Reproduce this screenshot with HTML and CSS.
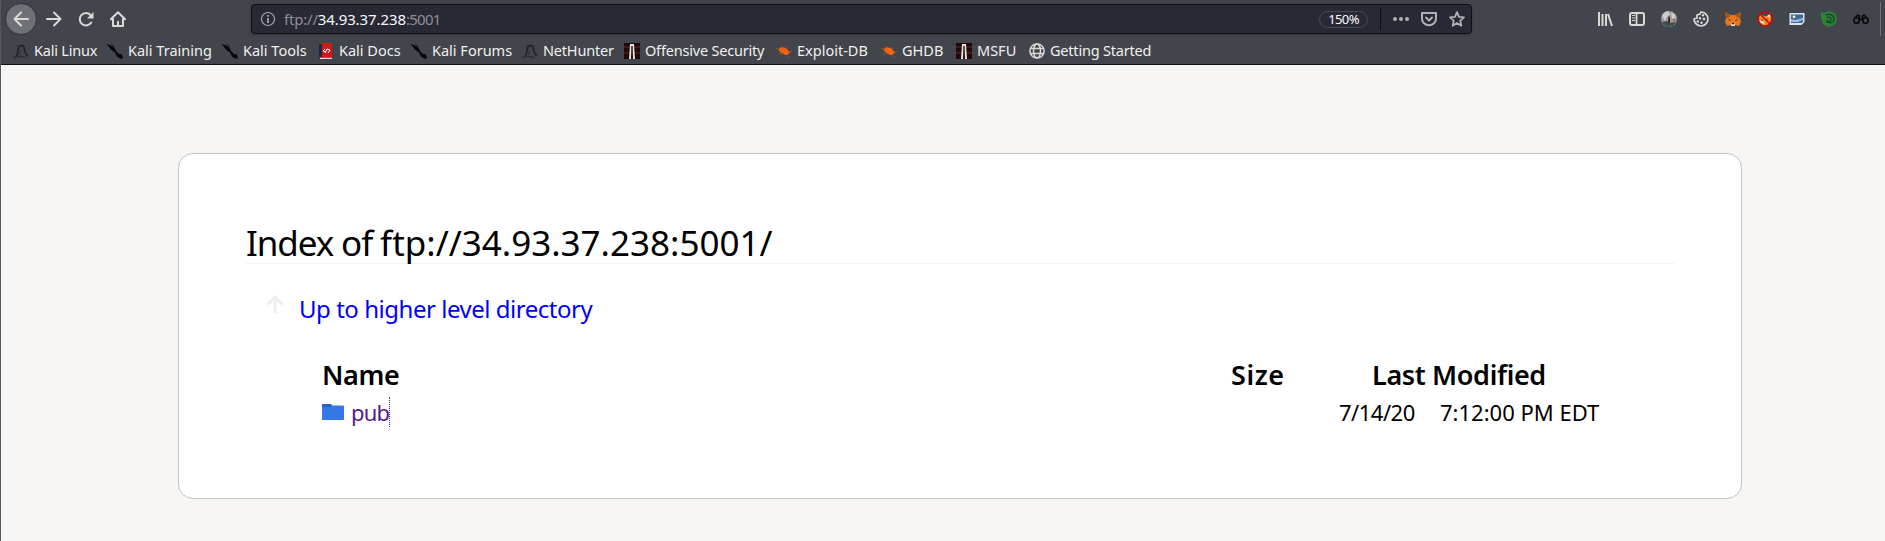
FILE: index.html
```html
<!DOCTYPE html>
<html lang="en">
<head>
<meta charset="utf-8">
<title>Index of ftp://34.93.37.238:5001/</title>
<link rel="stylesheet" href="styles.css">
</head>
<body>
<svg class="defs" width="0" height="0">
  <symbol id="dragon" viewBox="0 0 16 16"><path d="M3 13C6 11 4 7 6 4c1-2 4-2 5 0 1 3 0 6 4 9" fill="none" stroke="#202328" stroke-width="1.800"/><path d="M4 3l4 0M9 7c-2 1-3 3-2 5" fill="none" stroke="#2a2d32"/><path d="M0 14.500c4-1.200 9-1.200 13 0" fill="none" stroke="#2a2d32" stroke-width="1.200"/></symbol>
  <symbol id="slash" viewBox="0 0 16 16"><path d="M0 1l4 1.500 3 1.500 2 4 3 3 3 .5 1 4-3 0-3-2-2-4-3-2-3-3.500z" fill="#060606"/><path d="M4 1l4 2" stroke="#24262b"/></symbol>
  <symbol id="bug" viewBox="0 0 16 16"><path d="M2.500 7l1-2 3-1 4 1.500 2.500 3 1.500 1.500-2 .5-1 1.500-2.500 0-3.500-2-2.500-2z" fill="#ee6410"/><path d="M0 5.500l4 1M5 3l1 2M10 4.500l2 1M2 11l4-1M12 13l2 1M14 8.500h2" stroke="#a3592b" stroke-width=".7"/></symbol>
  <symbol id="offsec" viewBox="0 0 16 16"><path d="M0 0h16v16H0z" fill="#230709"/><path d="M0 4h16M0 10h16" stroke="#4b3437"/><path d="M6 1h4l1 15H9L8 6 7 16H5z" fill="#e8e2df"/><path d="M7.300 3h1.400v12H7.300z" fill="#171315"/></symbol>
</svg>
<header class="chrome">
  <nav class="toolbar">
    <span class="back"><svg width="16" height="16" viewBox="0 0 16 16"><path d="M15 8H2M8 1.500 1.500 8 8 14.500" class="ln"/></svg></span>
    <svg class="fwd" width="16" height="16" viewBox="0 0 16 16"><path d="M1 8h13M8 1.500 14.500 8 8 14.500" class="ln"/></svg>
    <svg class="reload" width="16" height="16" viewBox="0 0 16 16"><path d="M13.300 11.500A6.200 6.200 0 1 1 12.500 4" class="ln"/><path d="M15.500 1v6.500H9z" fill="#d9d9d6"/></svg>
    <svg class="home" width="16" height="16" viewBox="0 0 16 16"><path d="M.9 8.300 8 1.300l7.100 7M3 8v7h10V8M8 15v-4.200" class="ln"/></svg>
    <div class="urlbar">
      <svg class="info" width="16" height="16" viewBox="0 0 16 16"><circle cx="8" cy="8" r="6.500" fill="none" stroke="#a3a4a8" stroke-width="1.200"/><path d="M8 7v5M8 4v1.800" stroke="#a3a4a8" stroke-width="1.800"/></svg>
      <span class="url"><span class="scheme">ftp://</span><span class="host">34.93.37.238</span><span class="port">:5001</span></span>
      <span class="zoom">150%</span>
      <span class="rule"></span>
      <svg width="16" height="16" viewBox="0 0 16 16" fill="#b1b1b3"><circle cx="2" cy="8" r="2"/><circle cx="8" cy="8" r="2"/><circle cx="14" cy="8" r="2"/></svg>
      <svg width="16" height="16" viewBox="0 0 16 16" fill="none" stroke="#b1b1b3" stroke-width="2" stroke-linecap="round" stroke-linejoin="round"><path d="M1 2h14v5.500a7 6.800 0 0 1-14 0z"/><path d="M5 6.500l3 3 3-3"/></svg>
      <svg width="16" height="16" viewBox="0 0 16 16" fill="none" stroke="#b1b1b3" stroke-width="1.800" stroke-linejoin="round"><path d="M8 1.200l2 4.600 5 .5-3.700 3.400 1 5L8 12.100l-4.300 2.600 1-5L1 6.300l5-.5z"/></svg>
    </div>
    <div class="tools">
      <svg width="16" height="16" viewBox="0 0 16 16" fill="none" stroke="#d9d9d6" stroke-width="2"><path d="M2 1v14M5.500 3v12M9 3v12M11 3l4 12"/></svg>
      <svg width="16" height="16" viewBox="0 0 16 16" fill="none" stroke="#d9d9d6"><rect x="1" y="2" width="14" height="12" rx="2" stroke-width="2"/><path d="M7.500 2v12" stroke-width="1.800"/><path d="M3 4.500h3M3 7h3M3 9.500h3"/></svg>
      <svg width="16" height="16" viewBox="0 0 16 16"><circle cx="8" cy="8" r="8" fill="#9b9a9a"/><path d="M1 5a8 8 0 0 1 6-5l2 3-3 3-2 4zM10 1l4 3 1 4-4 1z" fill="#d0cdcf"/><path d="M1 11l5-1 2 2 7-1-3 4-5 1-4-2z" fill="#3b5146"/><path d="M7.500 5l1.500 1v6H7z" fill="#3b211f"/><path d="M11 8l2 3 2-1-1-3z" fill="#a0706b"/></svg>
      <svg width="16" height="16" viewBox="0 0 16 16" fill="none" stroke="#d9d9d6" stroke-width="1.700"><path d="M8 1a7 7 0 1 1-7 7l3-1V4l3-1z" stroke-linejoin="round"/><g fill="#d9d9d6" stroke="none"><circle cx="10" cy="4.300" r="1.200"/><circle cx="7" cy="7.300" r="1.200"/><circle cx="11" cy="8" r="1.300"/><circle cx="4.800" cy="10.500" r="1.200"/><circle cx="8.500" cy="11.700" r="1.200"/></g></svg>
      <svg width="16" height="16" viewBox="0 0 16 16"><path d="M0 1l6 3h4l6-3-1 6 1 4-2 4-4-1-1 1H7l-1-1-4 1-2-4 1-4z" fill="#e8761b"/><path d="M0 1l6 3-3 3H1zM16 1l-6 3 3 3h2z" fill="#a4541f"/><path d="M3 8l3 1-1 1zM13 8l-3 1 1 1z" fill="#213344"/><path d="M6 12.500h4V15H6z" fill="#dfd7ce"/><path d="M7 12h2v1.300H7z" fill="#201713"/></svg>
      <svg width="16" height="16" viewBox="0 0 16 16"><path d="M3 3l4 2h3l4-3v7l-2 4-5 2-4-3-1-5z" fill="#f08a1e"/><path d="M10 5l3-2v4zM2 9l4 1 2 3-4-1z" fill="#e9e1d6"/><path d="M9 8l2 1-2 1zM5 8l1 1-2 1z" fill="#3a2317"/><circle cx="8" cy="8" r="7.200" fill="none" stroke="#c4090d" stroke-width="1.500"/><path d="M3 3l10 10" stroke="#c4090d" stroke-width="1.500"/></svg>
      <svg width="16" height="16" viewBox="0 0 16 16"><path d="M.5 2h15v9l-3 3H.5z" fill="#dfe1e4"/><path d="M2 3.500h12V11l-1.500 1H2z" fill="#3d669f"/><path d="M2 8l4 1 4-1 4-1v2l-5 2H2z" fill="#9db8d0"/><circle cx="5" cy="5.800" r="1.400" fill="#f3f2dc"/></svg>
      <svg width="16" height="16" viewBox="0 0 16 16"><path d="M0 1l3 1 5-2 6 2 2 5-1 5-4 3-4 1-5-3-2-6z" fill="#2f8038"/><path d="M5 4c4-2 8 0 8 4 0 4-5 5-8 2 3 1 5 0 5-2s-3-2-4-1" fill="none" stroke="#164d20" stroke-width="1.500"/></svg>
      <svg width="16" height="16" viewBox="0 0 16 16" fill="none" stroke="#08090a"><circle cx="3.500" cy="9.500" r="2.700" stroke-width="1.600"/><circle cx="12.500" cy="9.500" r="2.700" stroke-width="1.600"/><path d="M2 7l3-3 1.500 1v3.500h3V5L11 4l3 3" stroke-width="1.600"/></svg>
    </div>
    <span class="endrule"></span>
  </nav>
  <nav class="bookmarks">
    <a class="w1"><svg><use href="#dragon"/></svg><span class="tight">Kali Linux</span></a>
    <a class="w2"><svg><use href="#slash"/></svg><span>Kali Training</span></a>
    <a class="w3"><svg><use href="#slash"/></svg><span>Kali Tools</span></a>
    <a class="w4"><svg viewBox="0 0 16 16"><path d="M2 0h12v16H2z" fill="#d61518"/><path d="M1 1h3v13H1z" fill="#182744"/><path d="M2 14.800h12V16H2z" fill="#e8d9d9"/><path d="M7 6L5 8l3 1M9 6l3 1-2 3M7 10l2-4" fill="none" stroke="#fff"/></svg><span>Kali Docs</span></a>
    <a class="w5"><svg><use href="#slash"/></svg><span>Kali Forums</span></a>
    <a class="w6"><svg><use href="#dragon"/></svg><span class="tight">NetHunter</span></a>
    <a class="w7"><svg><use href="#offsec"/></svg><span class="tight">Offensive Security</span></a>
    <a class="w8"><svg><use href="#bug"/></svg><span>Exploit-DB</span></a>
    <a class="w9"><svg><use href="#bug"/></svg><span>GHDB</span></a>
    <a class="w10"><svg><use href="#offsec"/></svg><span>MSFU</span></a>
    <a class="w11"><svg viewBox="0 0 16 16" fill="none" stroke="#d9d9d6" stroke-width="1.500"><circle cx="8" cy="8" r="7.100"/><ellipse cx="8" cy="8" rx="3.500" ry="7"/><path d="M1 5.500h14M1 10.500h14"/></svg><span class="tight">Getting Started</span></a>
  </nav>
</header>
<main class="card">
  <h1><span class="lead">Index of </span>ftp://34.93.37.238:5001/</h1>
  <p class="up"><svg width="18" height="18" viewBox="0 0 18 18"><path d="M9 18V2M1.500 9.500 9 2l7.500 7.500" fill="none" stroke="#eeeeec" stroke-width="3"/></svg><a>Up to higher level directory</a></p>
  <div class="listing head"><span class="name">Name</span><span class="size">Size</span><span class="modified">Last Modified</span></div>
  <div class="listing row"><a class="pub"><svg width="22" height="16" viewBox="0 0 22 16"><path d="M1 0h8l1 1.500h11a1 1 0 0 1 1 1V15a1 1 0 0 1-1 1H1a1 1 0 0 1-1-1V1a1 1 0 0 1 1-1z" fill="#3578e5"/><path d="M1 0h8l1 1.500L8.500 3H0V1a1 1 0 0 1 1-1z" fill="#2362c8"/></svg><span>pub</span></a><span class="date">7/14/20</span><span class="time">7:12:00 PM EDT</span></div>
</main>
</body>
</html>
```
FILE: styles.css
```css
* { box-sizing: border-box; }
html { height: 100%; }
body { margin: 0; height: 541px; overflow: hidden; background: #f6f5f4; border-left: 1px solid #55575b; font-family: "Noto Sans", sans-serif; color: #000; }
svg { display: block; flex: none; }
.defs { position: absolute; }
.ln { fill: none; stroke: #d9d9d6; stroke-width: 2; stroke-linecap: round; stroke-linejoin: round; }
.chrome { height: 65px; background: #42454c; border-bottom: 1px solid #0d0f12; }
.toolbar { display: flex; align-items: center; height: 38px; padding-left: 4px; }
.back { width: 32px; height: 32px; border-radius: 50%; background: #6f7176; border: 1px solid #303237; display: flex; align-items: center; justify-content: center; }
.fwd { margin-left: 9px; }
.reload { margin-left: 16px; }
.home { margin-left: 16px; }
.urlbar { display: flex; align-items: center; width: 1221px; height: 30px; margin-left: 125px; padding-left: 8px; background: #272935; border: 1px solid #0d0f12; border-radius: 4px; box-shadow: 0 1px 3px #33363b; }
.url { width: 1035px; margin-left: 8px; font-size: 15px; line-height: 28px; white-space: nowrap; color: #8e8f94; }
.scheme { letter-spacing: -.2px; }
.host { color: #f9f9fa; letter-spacing: -.1px; }
.port { letter-spacing: -.7px; }
.zoom { width: 49px; height: 17px; border: 1px solid #484b55; border-radius: 9px; font-size: 13px; line-height: 14px; text-align: center; color: #f9f9fa; letter-spacing: -.6px; }
.rule { width: 1px; height: 22px; background: #0d0f12; margin: 0 12px; }
.urlbar svg + svg { margin-left: 12px; }
.tools { display: flex; gap: 16px; margin-left: 125px; }
.endrule { width: 1px; height: 34px; margin-left: 11px; background: #707277; }
.bookmarks { display: flex; padding-left: 12px; }
.bookmarks a { display: flex; align-items: center; gap: 5px; height: 26px; font-size: 14.500px; color: #f0f0ee; white-space: nowrap; }
.bookmarks svg { width: 16px; height: 16px; }
.bookmarks span { line-height: 20px; padding-bottom: 2px; }
.tight { letter-spacing: -.2px; }
.w1 { width: 94px; } .w2 { width: 115px; } .w3 { width: 96px; } .w4 { width: 93px; } .w5 { width: 111px; } .w6 { width: 102px; }
.w7 { width: 152px; } .w8 { width: 105px; } .w9 { width: 75px; } .w10 { width: 73px; }
.card { width: 1564px; height: 346px; margin: 88px 0 0 177px; padding: 66px 66px 0; background: #fff; border: 1px solid #c8c4bf; border-radius: 15px; }
h1 { margin: 0; height: 44px; padding-left: 1px; border-bottom: 1px solid #f3f3f2; font-weight: 400; font-size: 35px; line-height: 46px; white-space: nowrap; }
.lead { letter-spacing: -1.100px; }
.up { display: flex; margin: 27px 0 0 21px; font-size: 24px; line-height: 36px; letter-spacing: -.47px; color: #00f; }
.up svg { margin-top: 4px; }
.up a { margin-left: 15px; }
.listing { display: flex; padding-left: 77px; white-space: nowrap; }
.head { margin-top: 29px; font-size: 27px; font-weight: 600; line-height: 38px; height: 41px; letter-spacing: -.35px; }
.name { width: 909px; }
.size { width: 141px; letter-spacing: .6px; }
.row { font-size: 22px; line-height: 30px; }
.pub { display: flex; width: 1017px; color: #551a8b; }
.pub svg { margin-top: 7px; }
.pub span { margin-left: 7px; border-right: 1px dotted #551a8b; letter-spacing: -.8px; }
.date { width: 101px; letter-spacing: -.5px; }
```
